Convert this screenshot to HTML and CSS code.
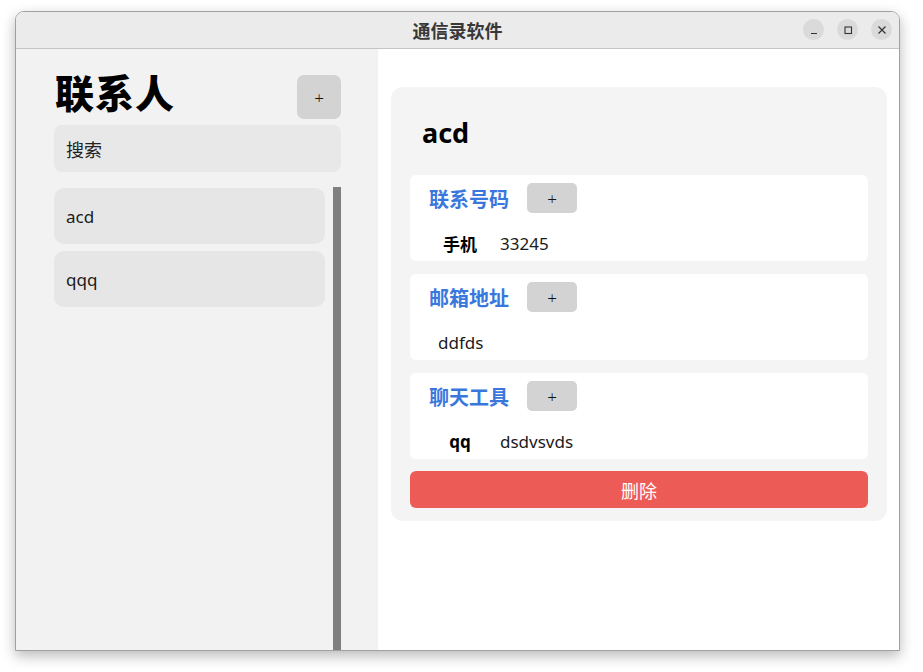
FILE: index.html
```html
<!DOCTYPE html>
<html lang="zh">
<head>
<meta charset="utf-8">
<title>通信录软件</title>
<link rel="stylesheet" href="styles.css">
</head>
<body>
<div class="window">
  <div class="titlebar">
    <div class="title">通信录软件</div>
    <div class="controls">
      <div class="ctl"><svg width="10" height="10" viewBox="0 0 10 10"><path d="M2 8.5h6" stroke="#333" stroke-width="1.2"/></svg></div>
      <div class="ctl"><svg width="10" height="10" viewBox="0 0 10 10"><rect x="2" y="2" width="6.5" height="6.5" fill="none" stroke="#333" stroke-width="1.1"/></svg></div>
      <div class="ctl"><svg width="10" height="10" viewBox="0 0 10 10"><path d="M1.5 1.5l7 7M8.5 1.5l-7 7" stroke="#333" stroke-width="1.2"/></svg></div>
    </div>
  </div>
  <div class="content">
    <aside class="sidebar">
      <div class="side-head">
        <h1 class="side-title">联系人</h1>
        <button class="btn add-big">+</button>
      </div>
      <div class="search">搜索</div>
      <div class="list-wrap">
        <div class="list">
          <div class="item">acd</div>
          <div class="item">qqq</div>
        </div>
        <div class="scrollbar"></div>
      </div>
    </aside>
    <main class="main">
      <div class="card">
        <div class="name">acd</div>
        <div class="section">
          <div class="sec-head"><span class="sec-label">联系号码</span><button class="btn add-small">+</button></div>
          <div class="row"><span class="k">手机</span><span class="v">33245</span></div>
        </div>
        <div class="section">
          <div class="sec-head"><span class="sec-label">邮箱地址</span><button class="btn add-small">+</button></div>
          <div class="row"><span class="v solo">ddfds</span></div>
        </div>
        <div class="section">
          <div class="sec-head"><span class="sec-label">聊天工具</span><button class="btn add-small">+</button></div>
          <div class="row"><span class="k">qq</span><span class="v">dsdvsvds</span></div>
        </div>
        <button class="delete">删除</button>
      </div>
    </main>
  </div>
</div>
</body>
</html>
```
FILE: styles.css
```css
* { box-sizing: border-box; }
html, body { margin: 0; padding: 0; }
body {
  background: #ffffff;
  font-family: "Noto Sans", "Noto Sans CJK SC", sans-serif;
  color: #111;
  width: 923px;
  height: 672px;
  overflow: hidden;
}
.window {
  margin: 11px 0 0 15px;
  width: 885px;
  height: 640px;
  border: 1px solid #a0a0a0;
  border-radius: 9px 9px 0 0;
  box-shadow: 0 5px 14px rgba(0,0,0,0.28);
  overflow: hidden;
  display: flex;
  flex-direction: column;
  background: #fff;
}
.titlebar {
  height: 37px;
  flex: none;
  background: #ebebeb;
  border-bottom: 1px solid #c4c4c4;
  position: relative;
  display: flex;
  align-items: center;
  justify-content: center;
}
.title {
  font-family: "Noto Sans CJK SC", sans-serif;
  font-weight: 700;
  font-size: 18px;
  color: #383838;
}
.controls {
  position: absolute;
  right: 7px;
  top: 7px;
  display: flex;
  gap: 13px;
}
.ctl {
  width: 21px;
  height: 21px;
  border-radius: 50%;
  background: #dadada;
  display: flex;
  align-items: center;
  justify-content: center;
}
.ctl svg { display: block; }
.content {
  flex: 1;
  display: flex;
  min-height: 0;
}
.sidebar {
  width: 362px;
  flex: none;
  background: #f2f2f2;
  padding: 26px 37px 0 38px;
  display: flex;
  flex-direction: column;
}
.side-head {
  display: flex;
  justify-content: space-between;
  align-items: flex-start;
  height: 44px;
}
.side-title {
  margin: -6px 0 0 1px;
  font-family: "Noto Sans CJK SC", sans-serif;
  font-weight: 900;
  font-size: 39px;
  line-height: 44px;
  letter-spacing: 1px;
  color: #000;
}
.btn {
  border: 0;
  background: #d3d3d3;
  color: #111;
  font-family: "Noto Sans", sans-serif;
  font-size: 17px;
  font-weight: 300;
  padding: 0;
  display: flex;
  align-items: center;
  justify-content: center;
}
.add-big {
  width: 44px;
  height: 44px;
  border-radius: 7px;
}
.search {
  margin-top: 6px;
  height: 47px;
  background: #e8e8e8;
  border-radius: 8px;
  padding-left: 12px;
  display: flex;
  align-items: center;
  font-family: "Noto Sans CJK SC", sans-serif;
  font-size: 18px;
  color: #222;
}
.list-wrap {
  flex: 1;
  margin-top: 15px;
  display: flex;
  gap: 8px;
}
.list {
  flex: 1;
  padding-top: 1px;
  display: flex;
  flex-direction: column;
  gap: 7px;
}
.item {
  height: 56px;
  background: #e6e6e6;
  border-radius: 10px;
  padding-left: 12px;
  display: flex;
  align-items: center;
  font-size: 17px;
  color: #1a1a1a;
}
.scrollbar {
  width: 8px;
  background: #7f7f7f;
}
.main {
  flex: 1;
  background: #fff;
  padding: 38px 12px 0 13px;
}
.card {
  background: #f4f4f4;
  border-radius: 12px;
  padding: 0 19px 13px 19px;
  display: flex;
  flex-direction: column;
  gap: 13px;
}
.name {
  height: 75px;
  padding-left: 12px;
  padding-top: 16px;
  display: flex;
  align-items: center;
  font-weight: 700;
  font-size: 27px;
  color: #000;
}
.section {
  background: #fff;
  border-radius: 6px;
  height: 86px;
  padding-top: 8px;
}
.sec-head {
  display: flex;
  align-items: center;
  height: 30px;
  padding-left: 19px;
  gap: 18px;
}
.sec-label {
  font-family: "Noto Sans CJK SC", sans-serif;
  font-weight: 700;
  font-size: 20px;
  color: #3a77dc;
}
.add-small {
  width: 50px;
  height: 30px;
  border-radius: 5px;
}
.row {
  margin-top: 13px;
  height: 34px;
  display: flex;
  align-items: center;
  padding-left: 22px;
  font-size: 17px;
}
.k {
  width: 56px;
  text-align: center;
  font-weight: 700;
  color: #000;
  font-family: "Noto Sans", "Noto Sans CJK SC", sans-serif;
}
.v {
  margin-left: 12px;
  color: #1a1a1a;
}
.v.solo { margin-left: 6px; }
.delete {
  margin-top: -1px;
  height: 37px;
  border: 0;
  border-radius: 6px;
  background: #ec5b56;
  color: #fff;
  font-family: "Noto Sans CJK SC", sans-serif;
  font-size: 18px;
}
```
